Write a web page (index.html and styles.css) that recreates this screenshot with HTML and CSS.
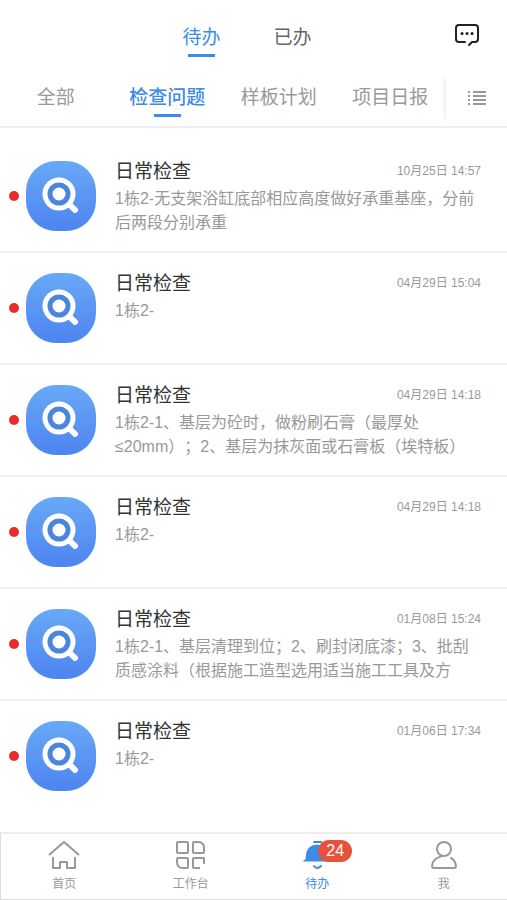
FILE: index.html
```html
<!DOCTYPE html>
<html lang="zh-CN">
  <head>
    <meta charset="UTF-8" />
    <meta name="viewport" content="width=device-width, initial-scale=1.0" />
    <link rel="stylesheet" href="styles.css">
    <title>待办</title>
  </head>
  <body>
    <!-- 列表图标 -->
    <svg class="symbols" width="0" height="0" aria-hidden="true">
      <defs>
        <linearGradient id="iconBg" x1="0" y1="0" x2="0" y2="1">
          <stop offset="0" stop-color="#69a9f6" />
          <stop offset="1" stop-color="#4d84f0" />
        </linearGradient>
        <symbol id="check" viewBox="0 0 70 70">
          <rect width="70" height="70" rx="30" fill="url(#iconBg)" />
          <path d="M43 43l6 6" stroke="#fff" stroke-width="6" stroke-linecap="round" />
          <circle cx="33" cy="33" r="14" fill="#4a86dc" stroke="#fff" stroke-width="5" />
          <circle cx="33" cy="33" r="6.5" fill="#fff" />
        </symbol>
      </defs>
    </svg>

    <header class="header">
      <div class="top-bar">
        <nav class="top-tabs">
          <a class="tab active" href="#todo">待办</a>
          <a class="tab" href="#done">已办</a>
        </nav>
        <button class="message-btn" type="button" aria-label="消息">
          <svg width="26" height="24" viewBox="0 0 26 24" fill="none" stroke="#222" stroke-width="2" stroke-linecap="round" stroke-linejoin="round">
            <path d="M11 19H5Q2 19 2 16V5Q2 2 5 2H21Q24 2 24 5V16Q24 19 21 19H18L15 22" />
            <path d="M8 10.500h.1M13 10.500h.1M18 10.500h.1" stroke-width="3" />
          </svg>
        </button>
      </div>

      <div class="filter-bar">
        <nav class="filter-tabs">
          <a class="tab" href="#all">全部</a>
          <a class="tab active bold" href="#check">检查问题</a>
          <a class="tab" href="#plan">样板计划</a>
          <a class="tab" href="#daily">项目日报</a>
        </nav>
        <button class="menu-btn" type="button" aria-label="全部分类">
          <svg width="18" height="18" viewBox="0 0 18 18" stroke="#999" stroke-width="2">
            <path d="M0 3h2M0 7h2M0 11h2M0 15h2M5 3h13M5 7h13M5 11h13M5 15h13" />
          </svg>
        </button>
      </div>
    </header>

    <main>
      <ul class="list">
        <li class="item">
          <span class="dot"></span>
          <svg class="icon"><use href="#check" /></svg>
          <div class="content">
            <div class="title-row">
              <h2>日常检查</h2>
              <time>10月25日 14:57</time>
            </div>
            <p>1栋2-无支架浴缸底部相应高度做好承重基座，分前后两段分别承重</p>
          </div>
        </li>
        <li class="item">
          <span class="dot"></span>
          <svg class="icon"><use href="#check" /></svg>
          <div class="content">
            <div class="title-row">
              <h2>日常检查</h2>
              <time>04月29日 15:04</time>
            </div>
            <p>1栋2-</p>
          </div>
        </li>
        <li class="item">
          <span class="dot"></span>
          <svg class="icon"><use href="#check" /></svg>
          <div class="content">
            <div class="title-row">
              <h2>日常检查</h2>
              <time>04月29日 14:18</time>
            </div>
            <p>1栋2-1、基层为砼时，做粉刷石膏（最厚处≤20mm）；2、基层为抹灰面或石膏板（埃特板）</p>
          </div>
        </li>
        <li class="item">
          <span class="dot"></span>
          <svg class="icon"><use href="#check" /></svg>
          <div class="content">
            <div class="title-row">
              <h2>日常检查</h2>
              <time>04月29日 14:18</time>
            </div>
            <p>1栋2-</p>
          </div>
        </li>
        <li class="item">
          <span class="dot"></span>
          <svg class="icon"><use href="#check" /></svg>
          <div class="content">
            <div class="title-row">
              <h2>日常检查</h2>
              <time>01月08日 15:24</time>
            </div>
            <p>1栋2-1、基层清理到位；2、刷封闭底漆；3、批刮质感涂料（根据施工造型选用适当施工工具及方</p>
          </div>
        </li>
        <li class="item">
          <span class="dot"></span>
          <svg class="icon"><use href="#check" /></svg>
          <div class="content">
            <div class="title-row">
              <h2>日常检查</h2>
              <time>01月06日 17:34</time>
            </div>
            <p>1栋2-</p>
          </div>
        </li>
      </ul>
    </main>

    <!-- 底部导航 -->
    <nav class="bottom-nav">
      <a href="#home">
        <svg width="32" height="32" viewBox="0 0 32 32" fill="none" stroke="#999" stroke-width="2" stroke-linejoin="round">
          <path d="M1 15L16 2L31 15" />
          <path d="M5 17V28H12V22H19V28H27V17" />
        </svg>
        <span>首页</span>
      </a>
      <a href="#work">
        <svg width="32" height="32" viewBox="0 0 32 32" fill="none" stroke="#999" stroke-width="2" stroke-linejoin="round">
          <rect x="2" y="2" width="11" height="11" rx="1" />
          <path d="M19 2H23Q29 2 29 8V12Q29 13 28 13H19Q18 13 18 12V3Q18 2 19 2" />
          <path d="M3 18H12Q13 18 13 19V27Q13 28 12 28H8Q2 28 2 22V19Q2 18 3 18Z" />
          <path d="M29 24V18H19Q18 18 18 19V27Q18 28 19 28H25" />
        </svg>
        <span>工作台</span>
      </a>
      <a class="active" href="#todo">
        <span class="bell">
          <svg width="32" height="32" viewBox="0 0 32 32" fill="none" stroke="#3b8be9" stroke-width="2" stroke-linecap="round">
            <path d="M13 2h7" />
            <path d="M5 19Q5 5 16 5T27 19L29 21H3Z" fill="#3b8be9" stroke-width="1" />
            <path d="M13 26Q16 30 20 26" />
          </svg>
          <span class="badge">24</span>
        </span>
        <span>待办</span>
      </a>
      <a href="#me">
        <svg width="32" height="32" viewBox="0 0 32 32" fill="none" stroke="#999" stroke-width="2" stroke-linecap="round" stroke-linejoin="round">
          <circle cx="16" cy="9" r="7" />
          <path d="M14 16Q4 19 4 26Q4 28 6 28H26Q28 28 28 26Q27 20 23 18" />
        </svg>
        <span>我</span>
      </a>
    </nav>
  </body>
</html>
```
FILE: styles.css
```css
/* 基本设置 */
* {
  margin: 0;
  padding: 0;
  box-sizing: border-box;
}

body {
  font-family: "Liberation Sans", "Noto Sans CJK SC", sans-serif;
  background-color: #fff;
  color: #333;
  display: flex;
  flex-direction: column;
  min-height: 100vh;
  text-spacing-trim: space-all;
}

a {
  color: inherit;
  text-decoration: none;
}

button {
  border: none;
  background: none;
  cursor: pointer;
}

svg {
  display: block;
}

.symbols {
  position: absolute;
}

/* 顶部 */
.header {
  border-bottom: 2px solid #eee;
}

.top-bar {
  display: flex;
  align-items: center;
  height: 70px;
  padding: 0 27px 0 40px;
}

.top-tabs {
  flex: 1;
  display: flex;
  justify-content: center;
  gap: 53px;
  padding-top: 12px;
  color: #666;
}

.tab {
  display: flex;
  flex-direction: column;
  align-items: center;
  gap: 4px;
  font-size: 19px;
  line-height: 24px;
  white-space: nowrap;
}

.tab::after {
  content: "";
  width: 27px;
  height: 3px;
}

.tab.active {
  color: #3b8be9;
}

.tab.active::after {
  background-color: #3b8be9;
}

.tab.bold {
  font-weight: 500;
}

.filter-bar {
  display: flex;
  height: 56px;
}

.filter-tabs {
  flex: 1;
  display: grid;
  grid-template-columns: repeat(4, 1fr);
  align-items: center;
  padding-top: 7px;
  color: #999;
}

.menu-btn {
  width: 61px;
  display: flex;
  justify-content: center;
  align-items: center;
  box-shadow: -6px 0 6px -6px rgba(0, 0, 0, 0.12);
}

/* 列表 */
main {
  flex: 1;
  padding-top: 13px;
}

.list {
  list-style: none;
}

.item {
  display: flex;
  align-items: flex-start;
  height: 112px;
  padding: 16px 26px 0 9px;
  border-bottom: 2px solid #f0f0f0;
}

.item:last-child {
  border-bottom: none;
}

.dot {
  flex: none;
  width: 10px;
  height: 10px;
  margin: 34px 7px 0 0;
  border-radius: 50%;
  background-color: #e62d2d;
}

.icon {
  flex: none;
  width: 70px;
  height: 70px;
  margin: 4px 19px 0 0;
}

.content {
  flex: 1;
  min-width: 0;
}

.title-row {
  display: flex;
  justify-content: space-between;
  align-items: center;
  height: 24px;
  margin-bottom: 6px;
}

.title-row h2 {
  font-size: 19px;
  font-weight: normal;
}

.title-row time {
  font-size: 12px;
  color: #999;
}

.content p {
  font-size: 16px;
  line-height: 24px;
  color: #999;
}

/* 底部导航 */
.bottom-nav {
  display: grid;
  grid-template-columns: repeat(4, 1fr);
  height: 68px;
  padding-top: 6px;
  border: 1px solid #ddd;
  border-width: 2px 0 1px 1px;
  border-top-color: #eee;
  color: #999;
  font-size: 12px;
  line-height: 20px;
}

.bottom-nav a {
  display: flex;
  flex-direction: column;
  align-items: center;
  gap: 2px;
}

.bottom-nav .active {
  color: #3b8be9;
}

.bell {
  position: relative;
}

.badge {
  position: absolute;
  top: 0;
  left: 17px;
  width: 34px;
  height: 22px;
  border-radius: 11px;
  background-color: #e5533c;
  color: #fff;
  font-size: 16px;
  line-height: 22px;
  text-align: center;
}
```
